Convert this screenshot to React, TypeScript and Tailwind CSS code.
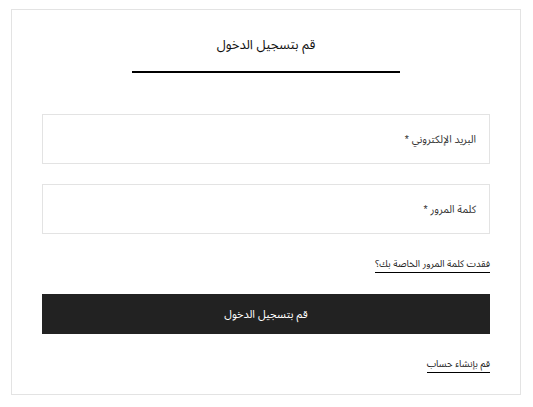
import React from "react";

export default function App() {
  const font = { fontFamily: '"Liberation Sans", "Noto Sans Arabic", "Noto Naskh Arabic", "DejaVu Sans", Arial, sans-serif' };
  return (
    <div className="w-[533px] h-[407px] bg-white pt-[9px] pl-[11px]" style={font}>
      <div dir="rtl" className="w-[510px] h-[386px] border border-[#e3e3e3] px-[30px] flex flex-col">
        <h1 className="mt-[25px] text-[13px] leading-[20px] text-[#111] text-center font-normal">قم بتسجيل الدخول</h1>
        <div className="mt-[16px] mx-auto w-[268px] h-[2px] bg-black" />
        <div className="mt-[41px] h-[50px] border border-[#e3e3e3] flex items-center px-[13px]">
          <span className="text-[10.5px] leading-[14px] text-[#333]">البريد الإلكتروني *</span>
        </div>
        <div className="mt-[20px] h-[50px] border border-[#e3e3e3] flex items-center px-[13px]">
          <span className="text-[10.5px] leading-[14px] text-[#333]">كلمة المرور *</span>
        </div>
        <div className="mt-[23px] flex">
          <a className="text-[9.5px] leading-[14px] text-[#222] border-b border-black pb-[1px]">فقدت كلمة المرور الخاصة بك؟</a>
        </div>
        <button className="mt-[21px] h-[40px] w-full bg-[#222222] text-white text-[11px]">قم بتسجيل الدخول</button>
        <div className="mt-[23px] flex">
          <a className="text-[9.5px] leading-[14px] text-[#222] border-b border-black pb-[1px]">قم بإنشاء حساب</a>
        </div>
      </div>
    </div>
  );
}
